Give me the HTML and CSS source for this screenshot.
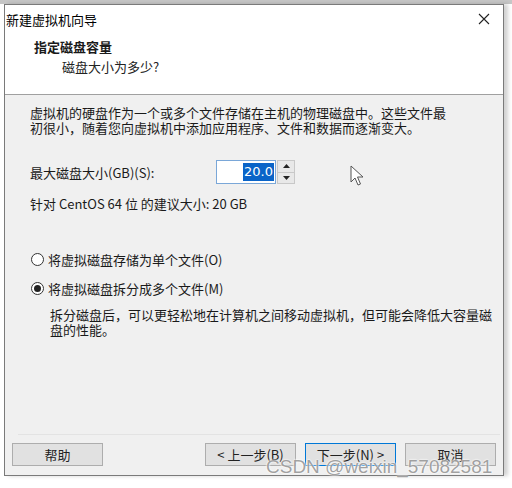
FILE: index.html
```html
<!DOCTYPE html>
<html lang="zh">
<head>
<meta charset="utf-8">
<link rel="stylesheet" href="styles.css">
</head>
<body>
<div class="desktop">
  <div class="window">
    <div class="header">
      <div class="titlebar">
        <span class="title">新建虚拟机向导</span>
        <svg class="close" width="12" height="12" viewBox="0 0 12 12"><path d="M1 1L11 11M11 1L1 11" stroke="#222" stroke-width="1.1" fill="none"/></svg>
      </div>
      <div class="heading">指定磁盘容量</div>
      <div class="subheading">磁盘大小为多少?</div>
    </div>
    <div class="content">
      <p class="intro">虚拟机的硬盘作为一个或多个文件存储在主机的物理磁盘中。这些文件最初很小，随着您向虚拟机中添加应用程序、文件和数据而逐渐变大。</p>
      <div class="size-row">
        <span class="label">最大磁盘大小(GB)(S):</span>
        <div class="spin">
          <div class="spin-input"><span class="sel">20.0</span></div>
          <div class="spin-btns">
            <div class="spin-btn"><svg width="7" height="4" viewBox="0 0 7 4"><path d="M3.5 0L7 4H0Z" fill="#222"/></svg></div>
            <div class="spin-btn"><svg width="7" height="4" viewBox="0 0 7 4"><path d="M0 0H7L3.5 4Z" fill="#222"/></svg></div>
          </div>
        </div>
      </div>
      <p class="recommend">针对 CentOS 64 位 的建议大小: 20 GB</p>
      <div class="options">
        <label class="radio"><span class="dot"></span>将虚拟磁盘存储为单个文件(O)</label>
        <label class="radio"><span class="dot on"></span>将虚拟磁盘拆分成多个文件(M)</label>
        <p class="desc">拆分磁盘后，可以更轻松地在计算机之间移动虚拟机，但可能会降低大容量磁盘的性能。</p>
      </div>
      <div class="spacer"></div>
      <div class="footer">
        <button class="btn">帮助</button>
        <div class="grow"></div>
        <button class="btn">&lt; 上一步(B)</button>
        <button class="btn primary">下一步(N) &gt;</button>
        <button class="btn">取消</button>
      </div>
    </div>
    <svg class="cursor" width="14" height="21" viewBox="0 0 14 21"><path d="M1 1V17L5 13L8 20L10.5 19L7.5 12H13Z" fill="#fff" stroke="#555" stroke-width="1"/></svg>
    <div class="watermark">CSDN @weixin_57082581</div>
  </div>
</div>
</body>
</html>
```
FILE: styles.css
```css
* { box-sizing: border-box; }
html, body { margin: 0; padding: 0; }
body {
  width: 512px; height: 488px; overflow: hidden;
  background: #fff;
  font-family: "Noto Sans CJK SC", "DejaVu Sans", sans-serif;
}
.desktop {
  width: 512px; height: 488px;
  padding: 4px 8px 12px 4px;
  background: linear-gradient(to bottom, #c6c6c6 0, #c6c6c6 4px, #fff 4px);
}
.window {
  position: relative;
  width: 500px; height: 472px;
  border: 1px solid #7a7a7a;
  background: #f0f0f0;
  display: flex; flex-direction: column;
  box-shadow: 4px 0 4px rgba(0,0,0,0.18);
  color: #1a1a1a;
}
.header {
  background: #fff;
  height: 90px;
  border-bottom: 1px solid #a0a0a0;
  flex: none;
}
.titlebar {
  height: 28px;
  display: flex; align-items: center; justify-content: space-between;
  padding: 0 13px 0 1px;
}
.title { font-size: 13px; color: #000; }
.heading {
  font-size: 13px; font-weight: bold; margin: 6px 0 0 29px; line-height: 16px;
}
.subheading { font-size: 13px; margin: 4px 0 0 57px; line-height: 16px; color: #222; }
.content {
  flex: 1;
  display: flex; flex-direction: column;
  padding: 10px 7px 9px 25px;
  font-size: 13px;
}
.intro { margin: 0; line-height: 15px; width: 421px; }
.size-row { display: flex; align-items: center; margin-top: 25px; }
.label { width: 186px; font-size: 13px; }
.spin { display: flex; height: 24px; }
.spin-input {
  width: 60px; height: 24px;
  border: 1px solid #7aa7d8; background: #fff;
  display: flex; justify-content: flex-end; align-items: center;
  padding-right: 1px;
  font-family: "DejaVu Sans", sans-serif; font-size: 13px;
}
.sel { background: #0a64c8; color: #fff; line-height: 18px; padding: 0 1px; }
.spin-btns { display: flex; flex-direction: column; width: 18px; margin-left: 1px; }
.spin-btn {
  flex: 1; background: #e8e8e8; border: 1px solid #c8c8c8;
  display: flex; align-items: center; justify-content: center;
}
.spin-btn + .spin-btn { border-top: none; }
.recommend { margin: 11px 0 0 0; line-height: 18px; }
.options { margin-top: 37px; display: flex; flex-direction: column; }
.radio { display: flex; align-items: center; height: 18px; margin-bottom: 11px; }
.dot {
  width: 13px; height: 13px; border-radius: 50%;
  border: 1px solid #333; background: #fff;
  margin: 0 4px 0 1px; position: relative;
}
.dot.on::after {
  content: ""; position: absolute; left: 2px; top: 2px;
  width: 7px; height: 7px; border-radius: 50%; background: #222;
}
.desc { margin: -1px 0 0 20px; line-height: 15px; width: 446px; }
.spacer { flex: 1; border-bottom: 1px solid #e3e3e3; margin: 0 -4px 0 -12px; }
.footer { display: flex; margin: 8px 0 0 -18px; gap: 9px; }
.grow { flex: 1; }
.btn {
  width: 91px; height: 23px;
  background: #e1e1e1; border: 1px solid #adadad;
  font-family: "Noto Sans CJK SC", sans-serif; font-size: 13px; color: #222;
  padding: 0; line-height: 20px;
}
.btn.primary { border: 1px solid #0078d7; }
.cursor { position: absolute; left: 345px; top: 160px; }
.watermark {
  position: absolute; left: 261px; top: 451px;
  font-family: "Liberation Sans", sans-serif; font-size: 19px;
  color: rgba(120,120,120,0.7);
  text-shadow: 0 0 2px #fff, 0 0 2px #fff;
  white-space: nowrap;
}
```
